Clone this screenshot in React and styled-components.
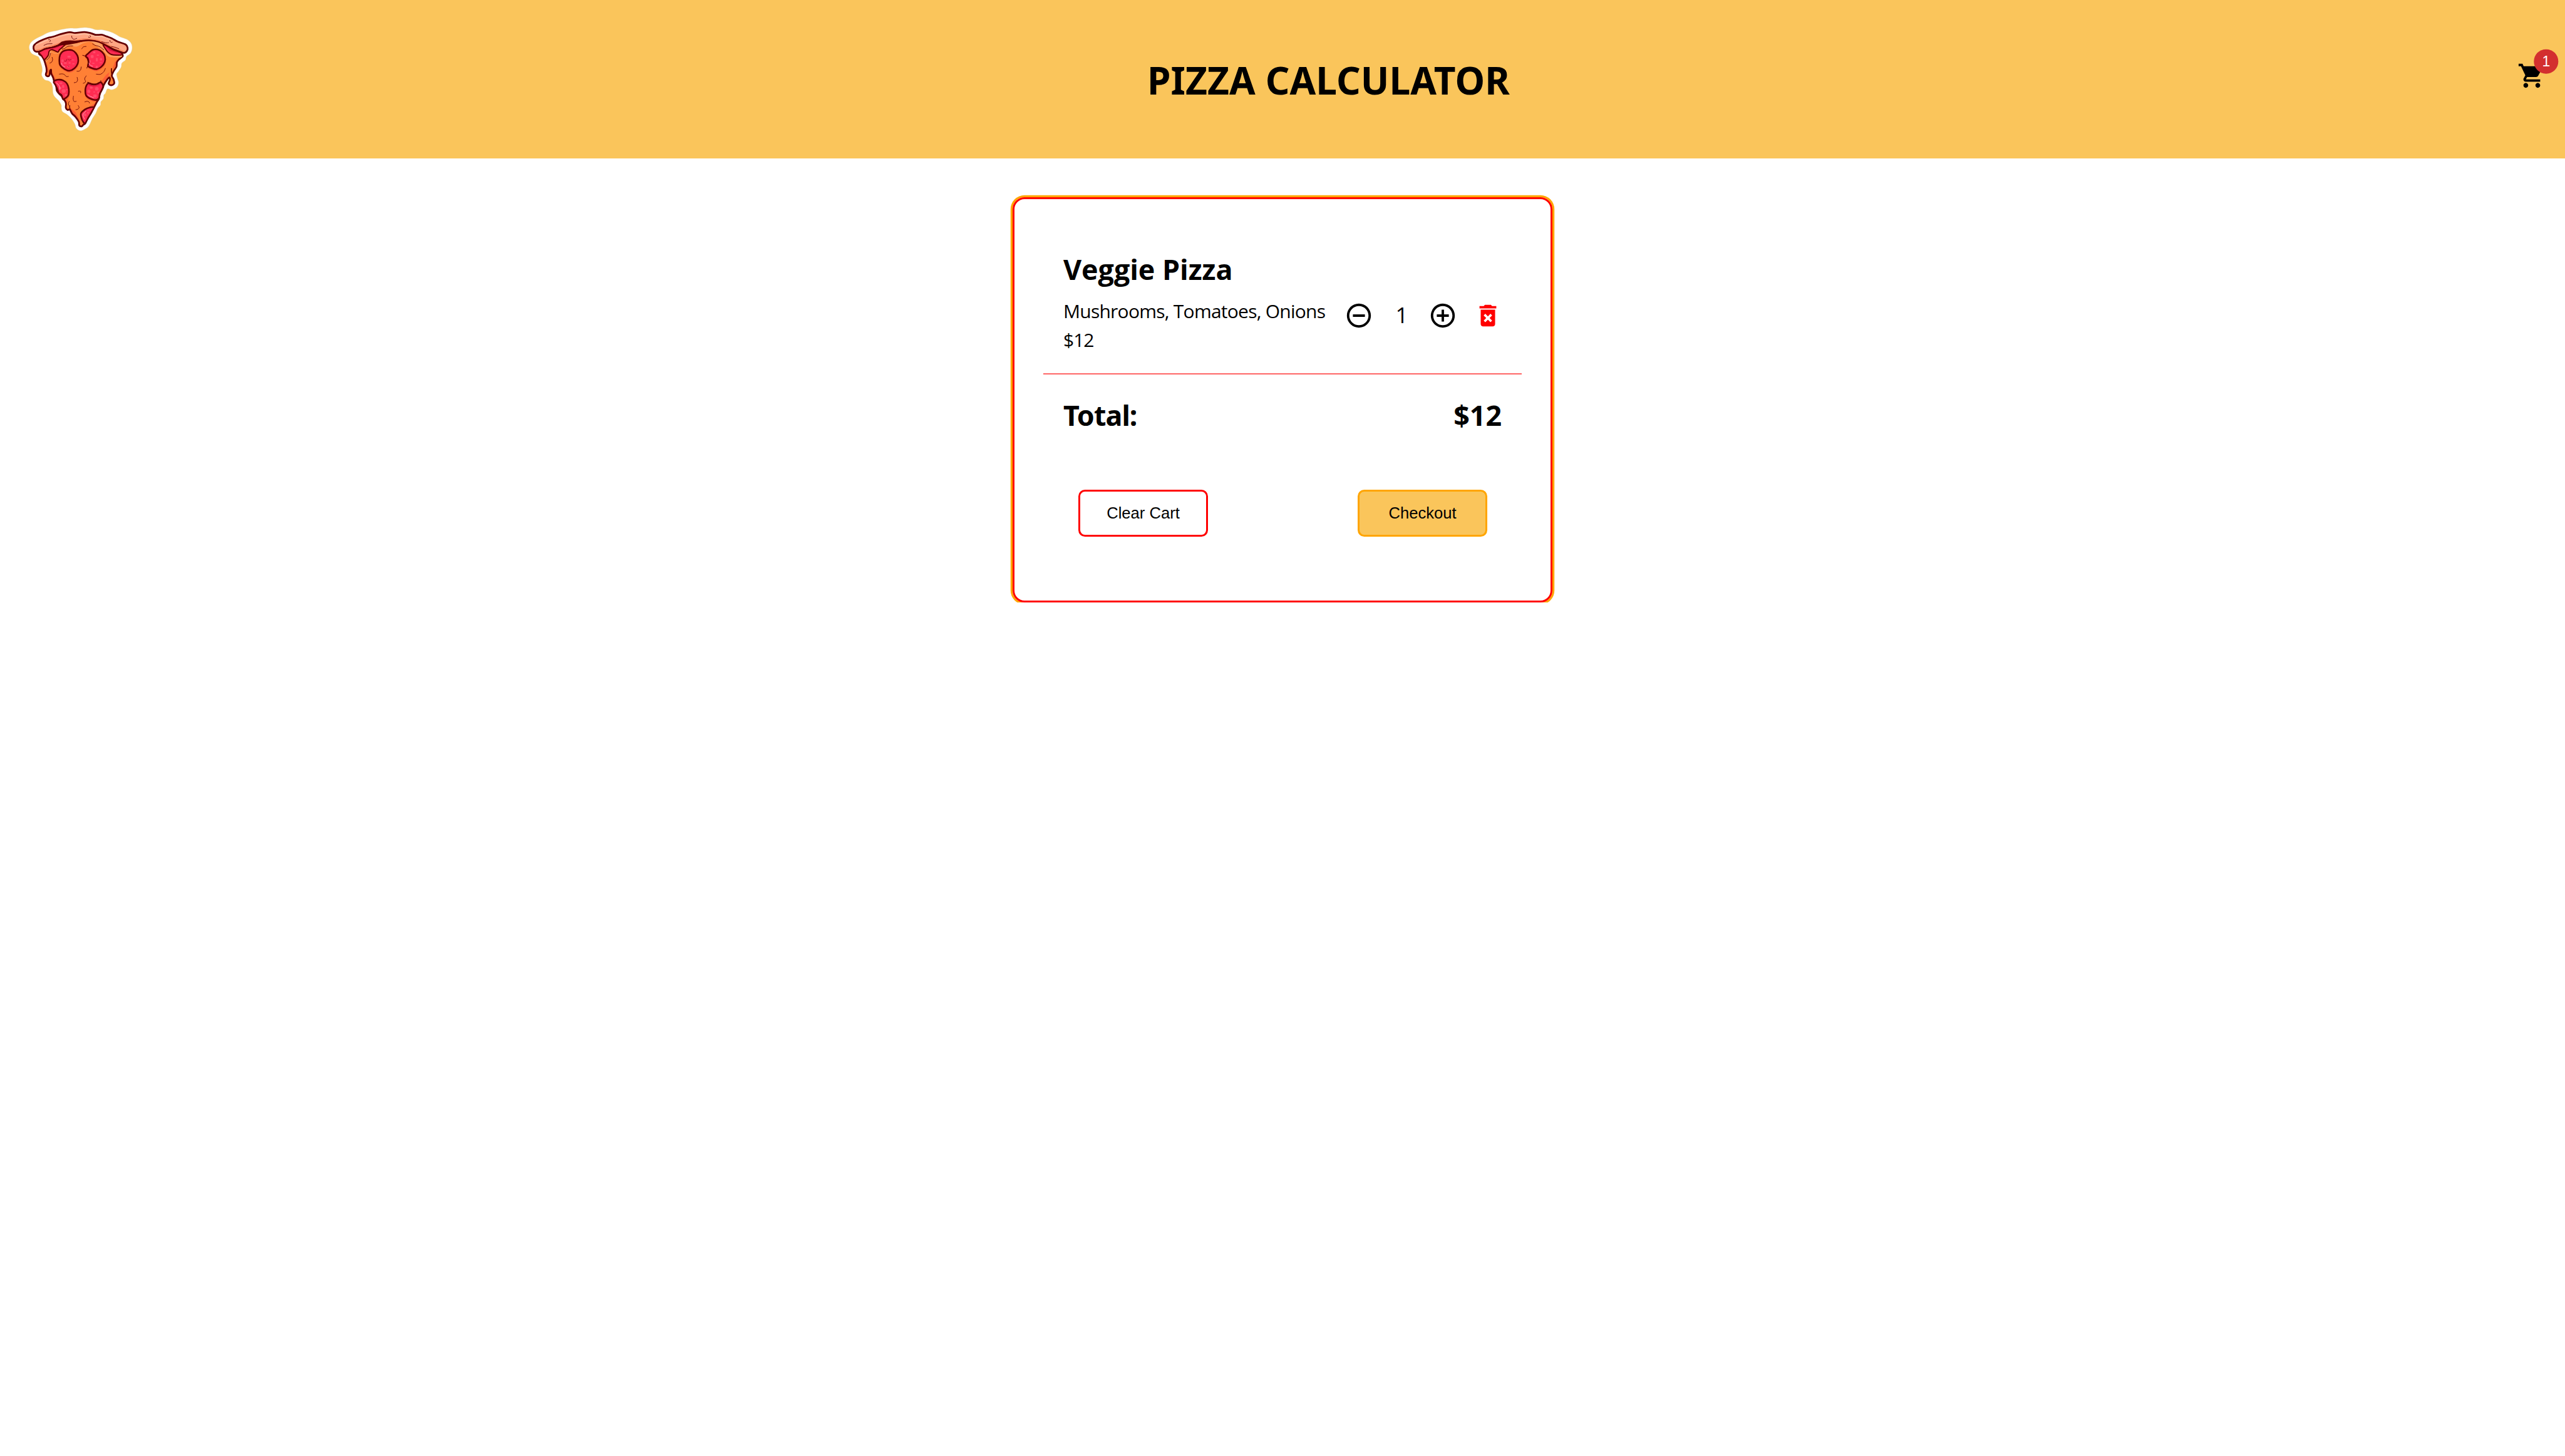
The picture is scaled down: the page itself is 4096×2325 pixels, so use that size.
import React from "react";
import styled, { createGlobalStyle } from "styled-components";
import {
  MdAddCircleOutline,
  MdDeleteForever,
  MdRemoveCircleOutline,
  MdShoppingCart,
} from "react-icons/md";

const GlobalStyle = createGlobalStyle`
  * {
    box-sizing: border-box;
  }

  body {
    margin: 0;
    background: #fff;
    color: #000;
    font-family: "Open Sans", "Noto Sans", sans-serif;
  }
`;

const Header = styled.header`
  display: flex;
  align-items: center;
  height: 253px;
  background: #fac55b;
`;

const LogoLink = styled.div`
  display: flex;
  align-self: flex-start;
  width: 1832px;
  padding: 25.6px 0 0 25.6px;
`;

const LogoSvg = styled.svg`
  display: block;
  width: 204.8px;
  height: 204.8px;
`;

const Title = styled.h1`
  margin: 0;
  padding-top: 2px;
  font-family: "Noto Sans", sans-serif;
  font-size: 60.3px;
  font-weight: 700;
  line-height: 82px;
  letter-spacing: 0.1px;
  white-space: nowrap;
`;

const CartButton = styled.div`
  position: relative;
  display: flex;
  align-self: flex-start;
  margin: 98px 30px 0 auto;
  font-size: 46px;
`;

const Badge = styled.span`
  position: absolute;
  top: 0;
  right: 0;
  display: flex;
  align-items: center;
  justify-content: center;
  width: 38.6px;
  height: 38.6px;
  border-radius: 50%;
  background: #d32f2f;
  color: #fff;
  font-family: "Liberation Sans", Arial, sans-serif;
  font-size: 23px;
  line-height: 1;
  transform: translate(50%, -50%);
`;

const Main = styled.main`
  display: flex;
  justify-content: center;
  padding-top: 62px;
`;

const Card = styled.section`
  width: 862px;
  height: 647px;
  padding: 82px 46px 0;
  border: 3px solid #ff0000;
  border-radius: 19px;
  box-shadow: 0 0 0 3.2px #ffa500;
`;

const Item = styled.article`
  padding: 0 31px 29.4px 32px;
  border-bottom: 2px solid #ff6666;
`;

const ItemName = styled.h2`
  margin: 0 0 14px;
  font-size: 44.8px;
  font-weight: 700;
  line-height: 60px;
`;

const ItemRow = styled.div`
  display: flex;
  justify-content: space-between;
  align-items: flex-start;
`;

const Details = styled.div`
  font-size: 30px;
  line-height: 46.3px;
  white-space: nowrap;
`;

const Toppings = styled.div`
  letter-spacing: -0.75px;
`;

const Price = styled.div`
  letter-spacing: -1px;
`;

const Controls = styled.div`
  display: flex;
  align-items: center;
  height: 46px;
  margin-top: 6.5px;
`;

const IconButton = styled.span`
  display: flex;
  font-size: 46px;
  color: ${({ $danger }) => ($danger ? "#ff0000" : "#000")};
  margin-left: ${({ $danger }) => ($danger ? "26px" : "0")};
`;

const Quantity = styled.span`
  padding-bottom: 3px;
  margin: 0 32.5px 0 35px;
  font-size: 35px;
  line-height: 43px;
`;

const TotalRow = styled.div`
  display: flex;
  justify-content: space-between;
  padding: 35px 32px 0 32px;
  font-size: 44.8px;
  font-weight: 700;
  line-height: 60px;
`;

const TotalLabel = styled.span`
  font-family: "Noto Sans", sans-serif;
  letter-spacing: -0.9px;
`;

const Actions = styled.div`
  display: flex;
  justify-content: space-between;
  padding: 89px 55px 0 56px;
`;

const Button = styled.button`
  width: 207px;
  height: 75px;
  padding: 0;
  border: 3px solid ${({ $primary }) => ($primary ? "#ffa500" : "#ff0000")};
  border-radius: 10.5px;
  background: ${({ $primary }) => ($primary ? "#fac55b" : "#fff")};
  color: #000;
  font-family: "Liberation Sans", Arial, sans-serif;
  font-size: 25.6px;
`;

/* Turns a flat list of coordinates into a smooth curve through every point. */
function curve(coords, closed = false) {
  const n = coords.trim().split(/[\s,]+/).map(Number);
  const p = [];
  for (let i = 0; i < n.length; i += 2) p.push([n[i], n[i + 1]]);
  const at = (i) =>
    closed
      ? p[(i + p.length) % p.length]
      : p[Math.max(0, Math.min(p.length - 1, i))];
  let d = `M${p[0]}`;
  const last = closed ? p.length : p.length - 1;
  for (let i = 0; i < last; i += 1) {
    const [a, b, c, e] = [at(i - 1), at(i), at(i + 1), at(i + 2)];
    d += `C${b[0] + (c[0] - a[0]) / 6},${b[1] + (c[1] - a[1]) / 6} ${
      c[0] - (e[0] - b[0]) / 6
    },${c[1] - (e[1] - b[1]) / 6} ${c}`;
  }
  return closed ? `${d}Z` : d;
}

const DARK = "#640003";

const sticker =
  "97,240 105,203 140,172 200,142 245,120 300,108 340,98 405,89 450,90 512,84 560,90 597,101 640,101 700,115 740,133 775,153 830,174 860,203 867,240 855,277 825,301 817,328 790,350 785,380 765,412 751,432 757,465 766,498 752,533 715,550 683,543 667,577 655,590 652,618 633,640 630,665 609,690 595,725 570,765 545,818 525,838 483,857 450,840 438,805 412,765 380,735 347,715 338,690 337,665 320,635 290,605 275,575 272,530 262,500 243,484 212,475 190,440 195,405 190,368 170,310 152,297 115,278";

const base =
  "172,268 192,298 208,326 216,350 225,385 227,412 221,437 235,449 248,441 252,412 260,400 262,428 276,460 284,488 298,520 304,558 322,580 344,603 350,620 363,630 372,655 371,685 384,701 398,697 404,702 418,728 442,752 468,790 472,818 490,824 502,812 516,803 530,772 560,722 582,682 604,640 618,618 625,582 648,535 656,512 682,472 696,458 701,475 691,504 710,516 733,503 728,472 715,445 728,412 750,378 753,345 766,325 788,308 795,285 740,190 500,150 260,180";

const crust =
  "129,228 137,212 172,188 235,162 280,152 330,134 400,119 440,125 510,118 560,127 595,139 640,138 680,152 715,165 760,190 818,211 833,235 829,258 808,274 768,262 725,246 690,225 655,208 610,188 545,180 490,184 440,193 375,193 320,215 270,232 215,244 180,261 150,265 133,254";

const lines = [
  "415,148 418,163 432,172 453,165",
  "551,143 557,150 551,157 541,156",
  "241,174 252,176 256,184 249,191",
  "701,180 703,190 710,195 718,194",
  "207,218 232,207 268,205",
  "640,190 668,198 691,198",
  "712,226 740,232 768,243",
  "344,246 362,241 378,228 400,222 423,222",
  "490,244 502,229 523,226",
  "571,206 588,217 605,221 628,230 655,252",
  "268,307 272,326 264,344 251,350",
  "486,379 482,400 470,411 454,411",
  "322,433 345,431 361,437 375,451 390,450",
  "455,457 459,475 452,492 433,497",
  "524,446 514,460 513,475 519,486 512,498 501,501",
  "599,433 630,434 655,415 667,390",
  "465,561 476,560 483,564 481,572",
  "428,598 426,620 433,638 449,636",
  "513,641 530,636 544,641 548,650",
  "463,668 470,682 462,695 446,699",
  "397,637 390,650 392,665",
  "632,480 634,488 629,497",
  "257,276 253,292 243,314 228,328",
];

const pepperoni = [
  "385,252 420,255 447,277 462,308 461,352 436,389 397,408 362,396 328,366 322,330 328,288 350,262",
  "520,298 540,277 570,252 608,249 642,267 663,300 662,343 637,378 602,396 562,387 537,372 541,345 535,315",
  "280,490 310,475 350,480 381,506 393,545 391,588 375,608 350,618 338,590 317,573 306,541 292,512",
  "540,502 570,510 603,508 632,495 650,520 641,550 625,580 618,615 590,627 550,615 522,592 517,548 525,518",
  "580,682 552,682 515,697 484,727 489,765 500,789 515,801 540,757 565,715",
];

const spots = [
  [395, 302, 12, 7], [424, 327, 10, 4], [367, 350, 11, 6], [399, 349, 8, 6],
  [391, 376, 11, 7], [428, 356, 9, 4], [346, 333, 9, 10],
  [583, 270, 9, 7], [568, 301, 11, 12], [603, 325, 7, 13], [634, 322, 8, 9],
  [603, 379, 9, 9], [551, 338, 7, 10], [611, 291, 9, 4], [577, 352, 9, 4], [632, 347, 10, 3],
  [351, 525, 8, 12], [334, 502, 11, 7], [355, 560, 15, 14], [372, 590, 10, 9],
  [331, 537, 8, 8], [378, 550, 6, 6],
  [603, 543, 13, 13], [561, 534, 11, 9], [543, 562, 11, 12], [589, 597, 13, 12],
  [614, 571, 8, 9], [583, 567, 6, 4],
  [515, 738, 10, 10], [536, 722, 6, 7], [540, 703, 9, 3],
];

function PizzaLogo() {
  return (
    <LogoSvg viewBox="0 0 960 960" fill="none" strokeLinecap="round" strokeLinejoin="round">
      <clipPath id="slice">
        <path d={curve(base, true)} />
      </clipPath>
      <path d={curve(sticker, true)} fill="#fff" stroke="#d9cdb4" strokeWidth="2" />
      <path d={curve(base, true)} fill="#ff8035" />

      {/* melted edges and shadows on the cheese */}
      <g fill="#ff5d35" clipPath="url(#slice)">
        <path d="M262 408L275 432L300 478L284 480L268 452Z" />
        <path d="M697 418L688 455L655 505L634 490L672 440Z" />
        <path d="M604 632L582 674L550 674L585 655Z" />
        <path d="M405 688L445 720L468 770L462 778L440 748L412 715Z" />
        <path d="M228 350L238 390L243 405L236 436L226 436L232 405Z" />
        <path d="M372 622L388 616L384 640L376 650Z" />
        <path d="M755 322L750 360L728 395L722 385L738 345Z" />
        {pepperoni.slice(0, 4).map((d) => (
          <path key={d} d={curve(d, true)} stroke="#ff5d35" strokeWidth="10" transform="translate(2 9)" />
        ))}
      </g>
      <path d={curve(base, true)} stroke={DARK} strokeWidth="13" />
      <path
        d={curve("222,335 245,300 250,262 290,275 320,268 350,238 400,208 470,200 545,186 610,192 650,222 690,285 740,294 788,292 785,306 735,308 690,300 655,262 610,230 560,192 500,202 455,226 395,224 350,246 320,275 285,280 262,270 255,300 232,335", true)}
        fill="#ffa060"
      />

      {/* sauce showing under the crust */}
      <path
        d={curve("172,266 230,240 300,222 368,205 345,232 322,252 312,268 290,258 262,250 246,262 240,290 226,310 210,323 190,296", true)}
        fill="#ff2c52" stroke={DARK} strokeWidth="9"
      />
      <path d="M246 252L300 226L330 222L312 232L262 246Z" fill="#d91743" />
      <path
        d={curve("650,212 665,240 685,268 712,286 750,291 794,286 770,268 720,250 685,228", true)}
        fill="#ff2c52" stroke={DARK} strokeWidth="9"
      />
      <path d="M668 226L700 258L745 272L775 278L730 258Z" fill="#d91743" />

      {/* crust */}
      <path d={curve(crust, true)} fill="#ffa683" stroke={DARK} strokeWidth="13" />
      <path
        d={curve("150,214 240,175 335,148 400,133 450,140 515,132 590,150 640,151 700,172")}
        stroke="#ffbfa3" strokeWidth="8"
      />
      <path
        d={curve("150,254 190,245 215,233 270,221 322,203 375,182 440,182 500,170 560,171 620,182 670,205 720,229 770,250 805,262")}
        stroke="#ff8558" strokeWidth="8"
      />
      <path
        d="M340 190Q380 176 440 183Q480 178 520 178L560 182Q500 182 455 200L395 212L300 222Z"
        fill={DARK}
      />

      {/* pepperoni */}
      {pepperoni.map((d) => (
        <path key={d} d={curve(d, true)} fill="#ff2c52" />
      ))}
      {spots.map(([x, y, w, h]) => (
        <rect key={`${x}-${y}`} x={x - w} y={y - h} width={w * 2} height={h * 2} rx={Math.min(w, h) * 0.8} fill="#ff4b69" />
      ))}
      {pepperoni.map((d) => (
        <path key={`edge-${d}`} d={curve(d, true)} stroke={DARK} strokeWidth="12" />
      ))}
      <path d={curve("497,292 515,298 532,318 538,350 534,372 528,388")} stroke={DARK} strokeWidth="5" />
      <path d={curve("534,494 570,506 603,504 632,490")} stroke={DARK} strokeWidth="6" />
      <path d={curve("545,514 580,522 625,510")} stroke="#d91743" strokeWidth="6" />
      <g stroke={DARK} strokeWidth="2.5">
        <path d={curve("361,334 372,336 378,328 376,322")} />
        <path d={curve("386,320 391,326 401,327 411,323")} />
        <path d={curve("387,370 390,375 396,376")} />
      </g>
      <g stroke="#ffd3dc" strokeWidth="3.5">
        <path d={curve("340,350 343,364 352,373 364,380")} />
        <path d={curve("544,350 550,362 560,370 571,374")} />
        <path d={curve("301,498 315,512 324,528 326,548")} />
        <path d={curve("536,587 550,598 578,609")} />
        <path d={curve("522,709 504,728 499,742 510,769")} />
      </g>

      {/* creases in the cheese and crust */}
      <g stroke={DARK} strokeWidth="4.2">
        {lines.map((d) => (
          <path key={d} d={curve(d)} />
        ))}
      </g>
      <path d={curve("713,392 712,415 718,445")} stroke={DARK} strokeWidth="8" />
      <path d={curve("400,668 400,685 408,708")} stroke={DARK} strokeWidth="6" />
    </LogoSvg>
  );
}

export default function App() {
  return (
    <>
      <GlobalStyle />
      <Header>
        <LogoLink>
          <PizzaLogo />
        </LogoLink>
        <Title>PIZZA CALCULATOR</Title>
        <CartButton>
          <MdShoppingCart />
          <Badge>1</Badge>
        </CartButton>
      </Header>
      <Main>
        <Card>
          <Item>
            <ItemName>Veggie Pizza</ItemName>
            <ItemRow>
              <Details>
                <Toppings>Mushrooms, Tomatoes, Onions</Toppings>
                <Price>$12</Price>
              </Details>
              <Controls>
                <IconButton>
                  <MdRemoveCircleOutline />
                </IconButton>
                <Quantity>1</Quantity>
                <IconButton>
                  <MdAddCircleOutline />
                </IconButton>
                <IconButton $danger>
                  <MdDeleteForever />
                </IconButton>
              </Controls>
            </ItemRow>
          </Item>
          <TotalRow>
            <TotalLabel>Total:</TotalLabel>
            <span>$12</span>
          </TotalRow>
          <Actions>
            <Button>Clear Cart</Button>
            <Button $primary>Checkout</Button>
          </Actions>
        </Card>
      </Main>
    </>
  );
}
